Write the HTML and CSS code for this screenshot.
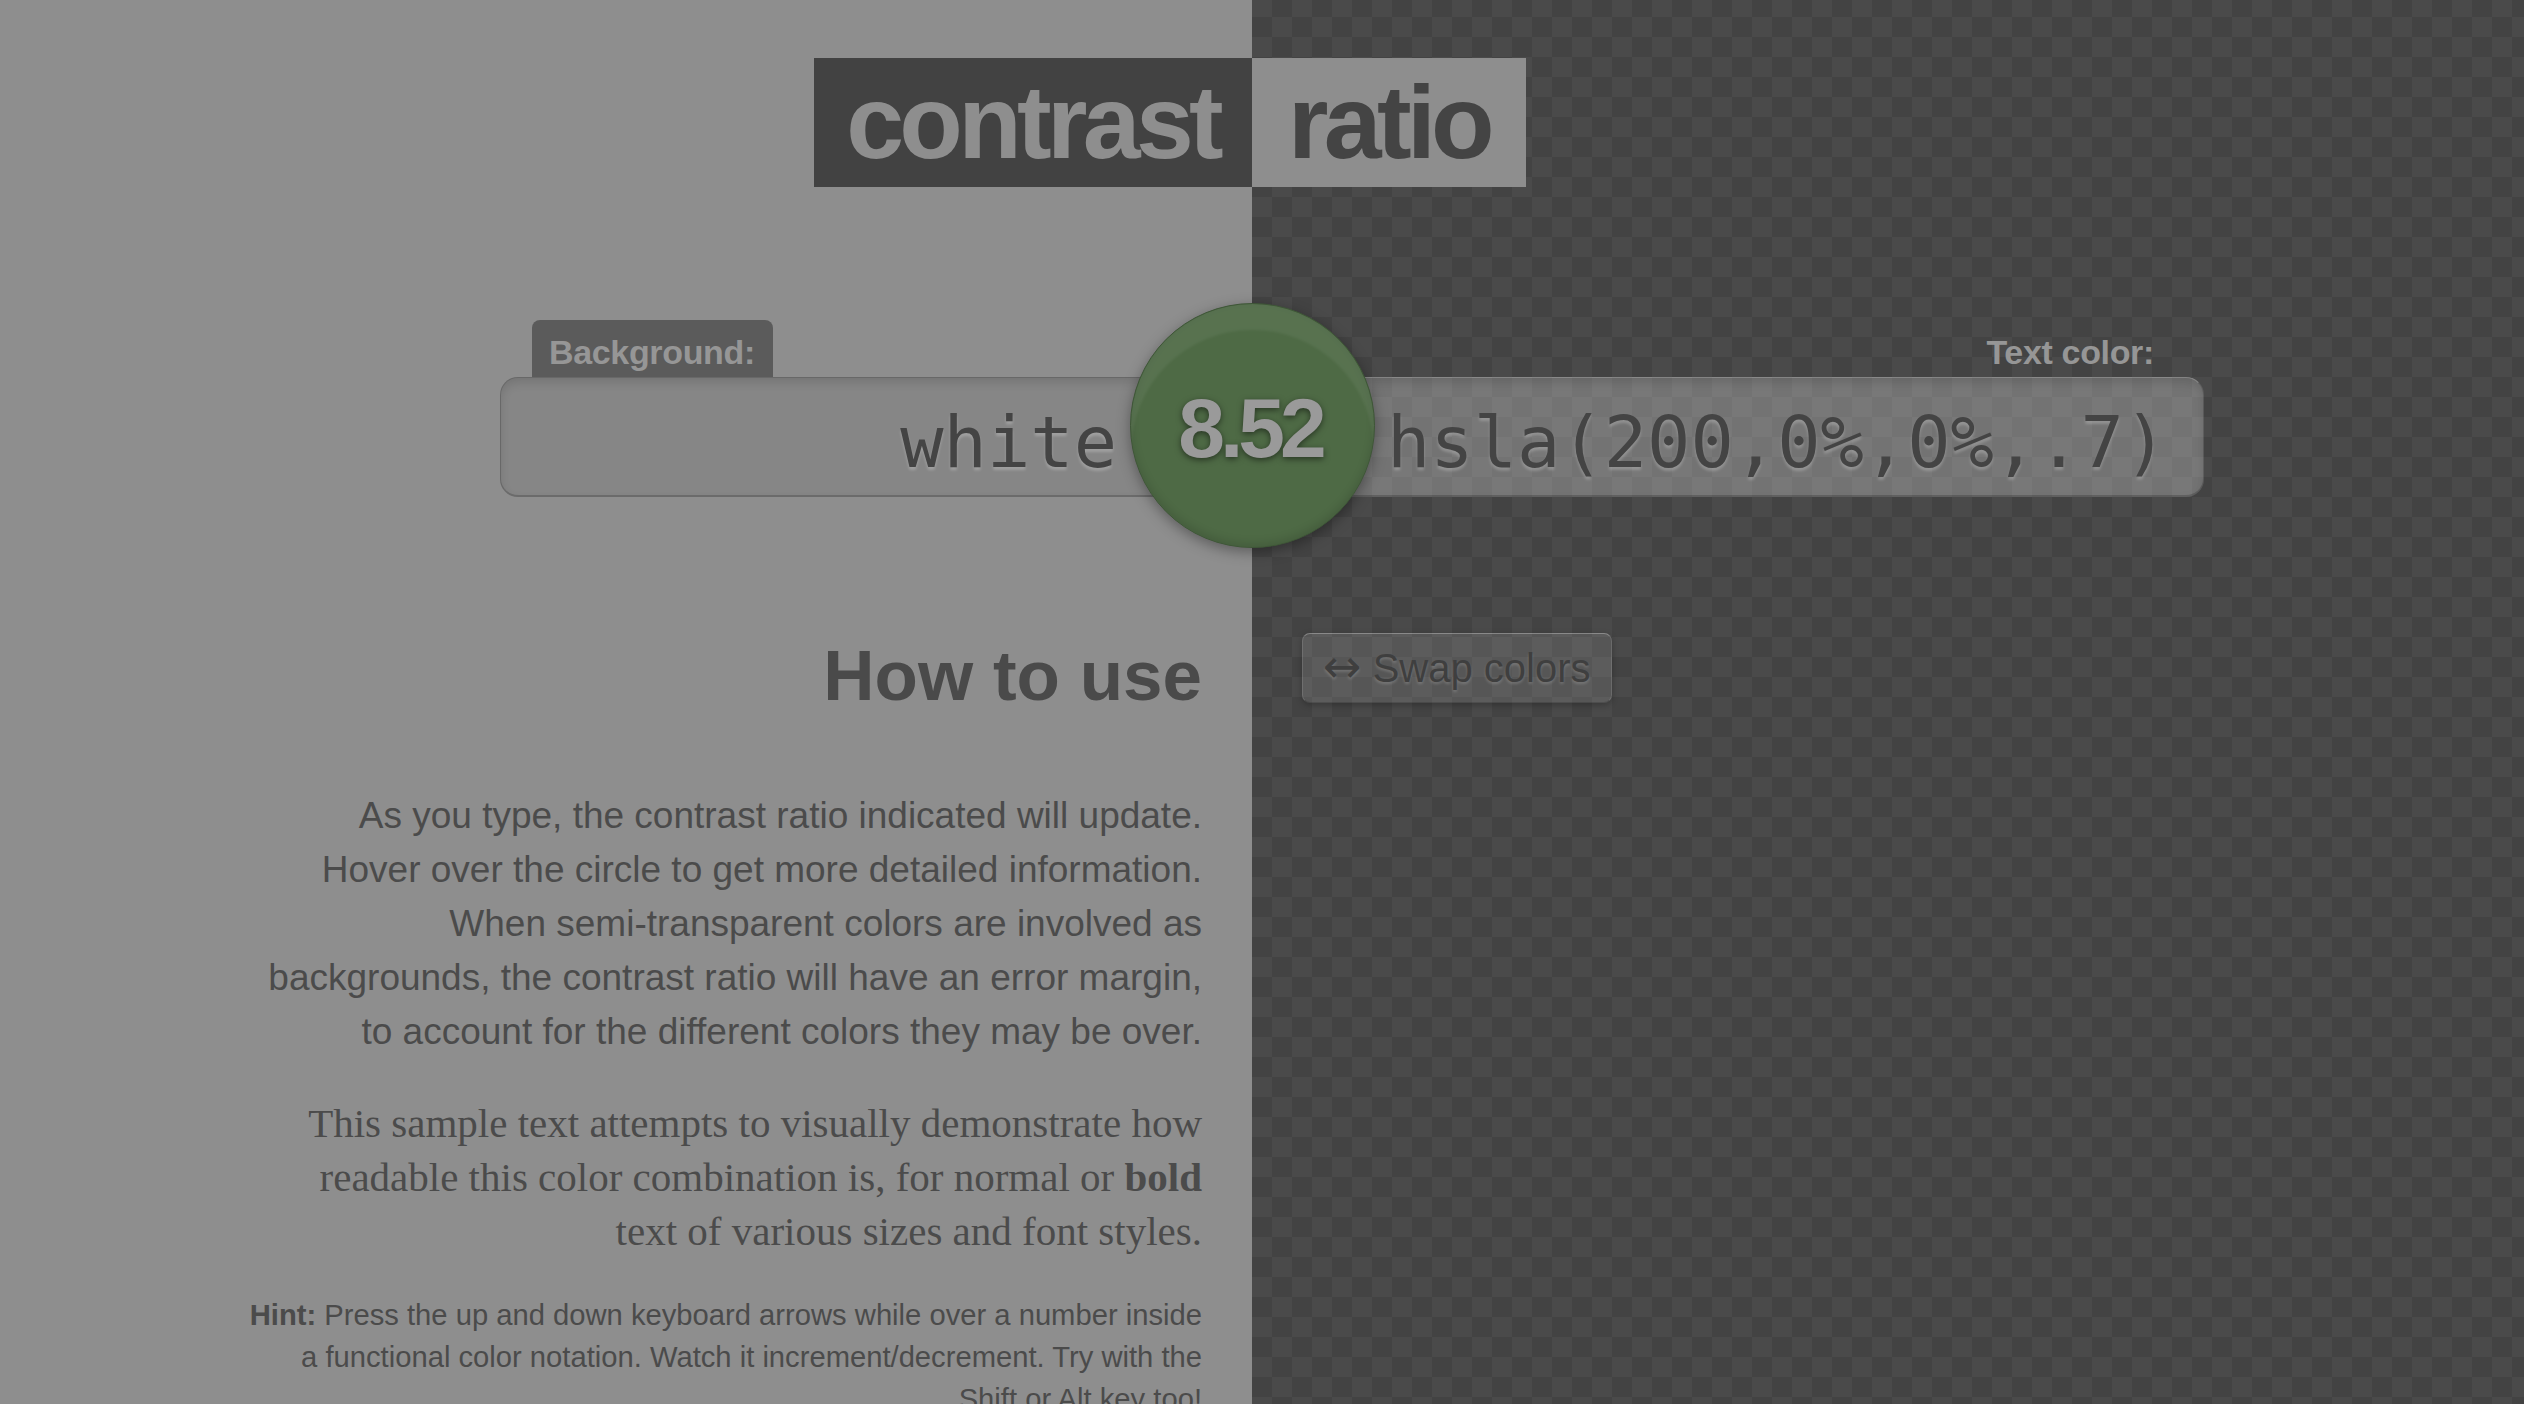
FILE: index.html
```html
<!DOCTYPE html>
<html lang="en">
<head>
<meta charset="utf-8">
<title>Contrast Ratio</title>
<link rel="stylesheet" href="styles.css">
</head>
<body>
<div class="page">
  <h1 class="logo"><span class="logo-a">contrast</span><span class="logo-b">ratio</span></h1>

  <div class="pickers">
    <div class="picker picker-bg">
      <label class="tab tab-bg" for="background">Background:</label>
      <input class="field field-bg" id="background" value="white" spellcheck="false">
    </div>
    <div class="picker picker-fg">
      <label class="tab tab-fg" for="foreground">Text color:</label>
      <input class="field field-fg" id="foreground" value="hsla(200,0%,0%,.7)" spellcheck="false">
    </div>
    <output class="ratio">8.52</output>
  </div>

  <div class="content">
    <section class="help">
      <h2 class="help-title">How to use</h2>
      <p class="help-text">As you type, the contrast ratio indicated will update.<br>Hover over the circle to get more detailed information.<br>When semi-transparent colors are involved as<br>backgrounds, the contrast ratio will have an error margin,<br>to account for the different colors they may be over.</p>
      <p class="sample">This sample text attempts to visually demonstrate how<br>readable this color combination is, for normal or <strong>bold</strong><br>text of various sizes and font styles.</p>
      <p class="hint"><strong>Hint:</strong> Press the up and down keyboard arrows while over a number inside<br>a functional color notation. Watch it increment/decrement. Try with the<br>Shift or Alt key too!</p>
    </section>
    <aside class="tools">
      <button class="swap" type="button"><span class="swap-icon">↔</span> Swap colors</button>
    </aside>
  </div>
</div>
</body>
</html>
```

FILE: styles.css
```css
html, body {
  margin: 0;
  padding: 0;
}

body {
  height: 1404px;
  overflow: hidden;
  font-family: "Liberation Sans", Arial, sans-serif;
  color: #4b4b4b;
  background:
    linear-gradient(to right, #8e8e8e 1252px, transparent 1252px),
    repeating-conic-gradient(#434343 0 25%, #4a4a4a 0 50%) 12px -3px / 40px 40px;
}

.page {
  display: flex;
  flex-direction: column;
}

/* ---------- logo ---------- */
.logo {
  margin: 58px 0 0;
  display: grid;
  grid-template-columns: 1252px 1fr;
  font-family: "Liberation Sans", Arial, sans-serif;
  font-weight: bold;
  font-size: 104px;
  line-height: 129px;
  letter-spacing: -0.045em;
}

.logo-a {
  justify-self: end;
  background: #424242;
  color: #8e8e8e;
  padding: 0 33px 0 32px;
}

.logo-b {
  justify-self: start;
  background: #8e8e8e;
  color: #444444;
  padding: 0 36px 0 36px;
}

/* ---------- pickers ---------- */
.pickers {
  position: relative;
  margin-top: 133px;
  display: grid;
  grid-template-columns: 1252px 1fr;
  align-items: end;
}

.picker {
  display: flex;
  flex-direction: column;
}

.picker-bg {
  justify-self: end;
  width: 752px;
  align-items: flex-start;
}

.picker-fg {
  justify-self: start;
  width: 952px;
  align-items: flex-end;
}

.tab {
  display: block;
  padding: 10px 18px 3px 17px;
  font-size: 34px;
  line-height: 44px;
  font-weight: bold;
  color: #969696;
  border-radius: 8px 8px 0 0;
  letter-spacing: -0.01em;
}

.tab-bg {
  margin-left: 32px;
  background: #5b5b5b;
}

.tab-fg {
  margin-right: 32px;
  background: transparent;
}

.field {
  display: block;
  box-sizing: border-box;
  height: 120px;
  margin: 0;
  font-family: "DejaVu Sans Mono", "Liberation Mono", monospace;
  font-size: 72px;
  color: #444444;
  text-shadow: 0 3px 3px rgba(255, 255, 255, 0.22);
  border: 1px solid rgba(0, 0, 0, 0.22);
  border-bottom: 2px solid rgba(0, 0, 0, 0.2);
  border-radius: 18px;
  outline: none;
  box-shadow: inset 0 5px 10px rgba(0, 0, 0, 0.12);
}

.field-bg {
  width: 752px;
  padding: 10px 134px 0 38px;
  text-align: right;
  background: #868686;
}

.field-fg {
  width: 952px;
  padding: 10px 20px 0 134px;
  text-align: left;
  background: rgba(255, 255, 255, 0.26);
  border-top-color: rgba(255, 255, 255, 0.12);
}

/* ---------- ratio circle ---------- */
.ratio {
  position: absolute;
  left: 1130px;
  top: -17px;
  width: 245px;
  height: 245px;
  box-sizing: border-box;
  padding-top: 6px;
  border-radius: 50%;
  border: 1px solid #3e5637;
  display: flex;
  align-items: center;
  justify-content: center;
  background: #4e6a45;
  color: #9a9a9a;
  font-family: "Liberation Sans", Arial, sans-serif;
  font-weight: bold;
  font-size: 84px;
  letter-spacing: -0.06em;
  text-indent: -0.06em;
  text-shadow: 0 2px 6px rgba(0, 0, 0, 0.5);
  box-shadow:
    inset 0 26px 3px rgba(255, 255, 255, 0.06),
    inset 0 -4px 8px rgba(0, 0, 0, 0.12),
    0 4px 14px rgba(0, 0, 0, 0.35);
}

/* ---------- content ---------- */
.content {
  margin-top: 136px;
  display: grid;
  grid-template-columns: 1252px 1fr;
  align-items: start;
}

.help {
  padding-right: 50px;
  text-align: right;
}

.help-title {
  margin: 0;
  font-size: 71px;
  line-height: 85px;
  font-weight: bold;
  color: #4a4a4a;
}

.help-text {
  margin: 71px 0 0;
  font-size: 37px;
  line-height: 54px;
}

.sample {
  margin: 37px 0 0;
  font-family: "Liberation Serif", "Times New Roman", serif;
  font-size: 41px;
  line-height: 54px;
}

.hint {
  margin: 36px 0 0;
  font-size: 29.2px;
  line-height: 42px;
}

.tools {
  padding-left: 50px;
}

.swap {
  display: inline-block;
  margin: 0;
  padding: 10px 20px;
  font-family: "Liberation Sans", Arial, sans-serif;
  font-size: 40px;
  line-height: 48px;
  color: #3f3f3f;
  text-shadow: 0 2px 3px rgba(255, 255, 255, 0.18);
  background: rgba(255, 255, 255, 0.1);
  border: 1px solid rgba(255, 255, 255, 0.12);
  border-top-color: rgba(255, 255, 255, 0.28);
  border-bottom-color: rgba(0, 0, 0, 0.15);
  border-radius: 8px;
  box-shadow: 0 2px 6px rgba(0, 0, 0, 0.25);
  cursor: pointer;
}

.swap-icon {
  font-family: "DejaVu Sans", sans-serif;
  font-size: 46px;
  line-height: 0;
}
```
